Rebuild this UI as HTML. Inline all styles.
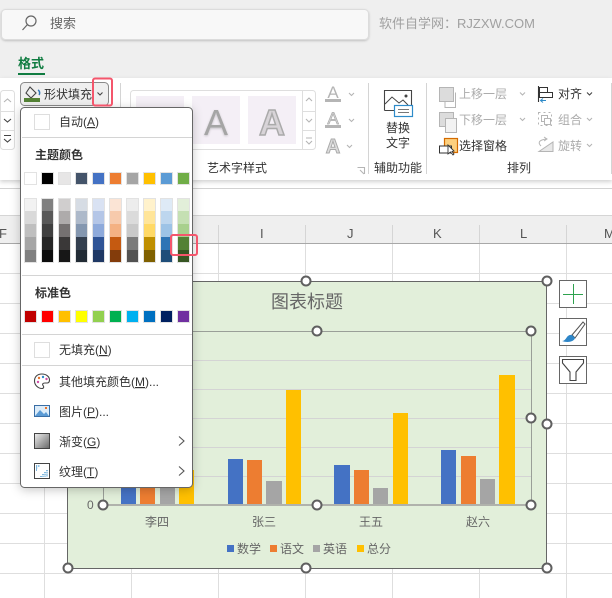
<!DOCTYPE html>
<html><head><meta charset="utf-8"><style>
html,body{margin:0;padding:0;background:#fff;width:612px;height:598px;overflow:hidden}
svg{display:block}
text{font-family:"Liberation Sans","Noto Sans CJK SC",sans-serif;font-size:12px;fill:#333}
.g{fill:#ababab}.u{text-decoration:underline}
.c{fill:none;stroke:#444;stroke-width:1.1}
.cg{fill:none;stroke:#b5b5b5;stroke-width:1.1}
.gr{stroke:#dedede;stroke-width:1}
.gl{stroke:#d5d5d5;stroke-width:1}
.h{fill:#fff;stroke:#5f5f5f;stroke-width:2}
.sep{stroke:#d4d4d4;stroke-width:1}
.l{font-size:12px;fill:#666}
</style></head><body>
<svg width="612" height="598" viewBox="0 0 612 598" xmlns="http://www.w3.org/2000/svg">
<defs>
<filter id="sh" x="-15%" y="-10%" width="130%" height="120%"><feDropShadow dx="0" dy="2" stdDeviation="5" flood-color="#000" flood-opacity=".22"/></filter>
<filter id="rs" x="-2%" y="-10%" width="104%" height="125%"><feDropShadow dx="0" dy="2" stdDeviation="2" flood-color="#000" flood-opacity=".18"/></filter>
<filter id="bs" x="-2%" y="-20%" width="104%" height="150%"><feDropShadow dx="0" dy="1" stdDeviation="1" flood-color="#000" flood-opacity=".2"/></filter>
<filter id="as" x="-20%" y="-20%" width="140%" height="140%"><feDropShadow dx="0" dy="1" stdDeviation="1" flood-color="#000" flood-opacity=".2"/></filter>
<linearGradient id="gd" x1="0" y1="0" x2="1" y2="1"><stop offset="0" stop-color="#f0f0f0"/><stop offset="1" stop-color="#666"/></linearGradient>
</defs>
<rect width="612" height="598" fill="#fff"/>
<!-- grid -->
<rect x="0" y="216" width="612" height="27" fill="#efefef"/>
<path class="gl" d="M0 215.500H612"/>
<path d="M0 243.500H612" stroke="#a8a8a8" stroke-width="1"/>
<path class="gl" d="M44.500 225V243M131.500 225V243M218.500 225V243M305.500 225V243M392.500 225V243M479.500 225V243M566.500 225V243"/>
<path class="gr" d="M0 273.500H612M0 303.500H612M0 333.500H612M0 363.500H612M0 393.500H612M0 423.500H612M0 453.500H612M0 483.500H612M0 513.500H612M0 543.500H612M0 573.500H612M44.500 244V598M131.500 244V598M218.500 244V598M305.500 244V598M392.500 244V598M479.500 244V598M566.500 244V598"/>
<text x="-1" y="238" style="font-size:13px;fill:#555">F</text>
<text x="260" y="238" style="font-size:13px;fill:#555">I</text>
<text x="347" y="238" style="font-size:13px;fill:#555">J</text>
<text x="433" y="238" style="font-size:13px;fill:#555">K</text>
<text x="520" y="238" style="font-size:13px;fill:#555">L</text>
<text x="604" y="238" style="font-size:13px;fill:#555">M</text>
<!-- top -->
<rect x="0" y="0" width="612" height="78" fill="#efefef"/>
<rect x="0" y="78" width="612" height="102" fill="#fff" filter="url(#rs)"/>
<path d="M0 188.500H612" stroke="#d2d2d2" stroke-width="1"/>
<rect x="1.500" y="9.500" width="367" height="30" rx="4" fill="#f8f8f8" stroke="#dcdcdc" filter="url(#bs)"/>
<circle cx="31" cy="21" r="5" fill="none" stroke="#666" stroke-width="1.200"/><path d="M27.500 24.500L22.500 30" stroke="#666" stroke-width="1.200"/>
<text x="50" y="28" style="font-size:13px;fill:#666">搜索</text>
<text x="379" y="28" style="font-size:13px;fill:#a0a0a0">软件自学网：RJZXW.COM</text>
<text x="18" y="68" style="font-size:13px;font-weight:bold;fill:#107c41">格式</text>
<rect x="18" y="73" width="27" height="2" fill="#107c41"/>
<!-- ribbon -->
<rect x="0.500" y="90.500" width="14" height="59" rx="3" fill="#fff" stroke="#dedede"/>
<path d="M0 111.500H14M0 130.500H14" stroke="#dedede"/>
<path d="M4 102L7.500 99L11 102" class="cg"/><path d="M4 119L7.500 122L11 119" class="c"/>
<path d="M4 135.500H11M4 139L7.500 142L11 139" class="c"/>
<rect x="20.500" y="82.500" width="88" height="23" rx="4" fill="#efefef" stroke="#8a8a8a"/>
<path d="M30 87L36 93L31 98L26 93Z" fill="none" stroke="#444" stroke-width="1.100"/>
<path d="M38 90C40 91 40 94 39 95" fill="none" stroke="#2e75b6" stroke-width="1.500"/>
<rect x="24" y="98" width="16" height="4" fill="#548235"/>
<text x="44" y="98.500">形状填充</text>
<path d="M97.500 92.500L100 95L102.500 92.500" class="c"/>
<path class="sep" d="M120.500 83V174M368.500 83V174M426.500 83V174M611.500 83V174"/>
<!-- gallery -->
<rect x="130.500" y="90.500" width="185" height="59" rx="3" fill="#fff" stroke="#dedede"/>
<rect x="136" y="96" width="48" height="48" fill="#f4eff6"/>
<rect x="192" y="96" width="48" height="48" fill="#f4eff6"/>
<rect x="248" y="96" width="48" height="48" fill="#f4eff6"/>
<text x="216" y="135" text-anchor="middle" filter="url(#as)" style="font-size:36px;fill:#a5a5a5">A</text>
<text x="272" y="135" text-anchor="middle" style="font-size:36px;fill:#d8d4d8;stroke:#aaa;stroke-width:1.500;font-weight:bold">A</text>
<path d="M302.500 91V149M302 111.500H315M302 130.500H315" stroke="#dedede"/>
<path d="M306 101L309 98L312 101M306 119L309 122L312 119M306 138H312M306 141L309 144L312 141" class="cg"/>
<text x="207" y="172">艺术字样式</text>
<text x="333" y="98" text-anchor="middle" style="font-size:17px;fill:#b5b5b5">A</text>
<rect x="325" y="99" width="16" height="3" fill="#b5b5b5"/>
<text x="333" y="124" text-anchor="middle" style="font-size:17px;fill:#d8d8d8;stroke:#aaa;stroke-width:.7">A</text>
<rect x="325" y="125" width="16" height="3" fill="#b5b5b5"/>
<text x="333" y="153" text-anchor="middle" style="font-size:20px;fill:#ddd;stroke:#aaa;stroke-width:1;font-weight:bold">A</text>
<path d="M349 93L351.500 95.500L354 93M349 119L351.500 121.500L354 119M347 145L349.500 147.500L352 145" class="cg"/>
<path d="M357.500 167.500H364.500V174M360 170L364 174" class="cg" stroke-width=".8"/>
<!-- alt text -->
<path d="M384.500 110.500V90.500H411.500V105" fill="none" stroke="#444" stroke-width="1.100"/>
<path d="M384.500 110.500H394M385 104L392 97L399 103L403 100L408 105" fill="none" stroke="#444" stroke-width="1"/>
<circle cx="406" cy="96" r="1.500" fill="#444"/>
<rect x="394.500" y="105.500" width="18" height="11" fill="#fff" stroke="#2e8bc9" stroke-width="1.200"/>
<path d="M398 109.500H409M398 112.500H409" stroke="#777"/>
<text x="398" y="132" text-anchor="middle">替换</text>
<text x="398" y="147" text-anchor="middle">文字</text>
<text x="398" y="172" text-anchor="middle">辅助功能</text>
<!-- arrange -->
<rect x="439.500" y="87.500" width="14" height="14" fill="#dcdcdc" stroke="#b5b5b5"/>
<path d="M455.500 92.500V107.500H445V102" fill="none" stroke="#b5b5b5"/>
<text x="459" y="98" class="g">上移一层</text>
<path d="M520 92.500L522.500 95L525 92.500M520 118L522.500 120.500L525 118" class="cg"/>
<rect x="439.500" y="112.500" width="14" height="14" fill="#dcdcdc" stroke="#b5b5b5"/>
<rect x="445.500" y="118.500" width="11" height="14" fill="#f2f2f2" stroke="#b5b5b5"/>
<text x="459" y="124" class="g">下移一层</text>
<rect x="444.500" y="138.500" width="13" height="14" fill="#fdd07f" stroke="#d46a00" stroke-width="1.200"/>
<rect x="439.500" y="146" width="12" height="7" fill="#fff" stroke="#333"/>
<path d="M448 145V154L450.500 152L453 155L454 154L452 151.500L454 151Z" fill="#fff" stroke="#333" stroke-width=".9"/>
<text x="459" y="150">选择窗格</text>
<text x="519" y="172" text-anchor="middle">排列</text>
<path d="M538.500 86V102" stroke="#333" stroke-width="1.100"/>
<rect x="539.500" y="87.500" width="8" height="5" fill="#fff" stroke="#333"/>
<rect x="539.500" y="92.500" width="13" height="5" fill="#fff" stroke="#333"/>
<path d="M546 100.500H541M543 98.500L540.500 100.500L543 102.500" fill="none" stroke="#2e8bc9"/>
<text x="558" y="98">对齐</text>
<path d="M587 92.500L589.500 95L592 92.500" class="c"/>
<rect x="538.500" y="112.500" width="13" height="13" fill="none" stroke="#b5b5b5" stroke-dasharray="2 3"/>
<rect x="541.500" y="115.500" width="6" height="6" fill="#fff" stroke="#b5b5b5"/>
<rect x="544.500" y="118.500" width="6" height="6" fill="#fff" stroke="#b5b5b5"/>
<text x="558" y="124" class="g">组合</text>
<path d="M587 118L589.500 120.500L592 118M587 144L589.500 146.500L592 144" class="cg"/>
<path d="M539 151.500H553V142Z" fill="#e8e8e8" stroke="#b5b5b5"/>
<path d="M541 146C537 142 540 140 546 139M544 137L547 139L544 141" fill="none" stroke="#b5b5b5"/>
<text x="558" y="150" class="g">旋转</text>
<!-- chart -->
<rect x="67.500" y="281.500" width="479" height="287" fill="#e2efda" stroke="#666" stroke-width="1"/>
<text x="307" y="308" text-anchor="middle" style="font-size:18px;fill:#666">图表标题</text>
<path d="M103 360.500H531M103 389.500H531M103 418.500H531M103 447.500H531M103 476.500H531" stroke="#d4d4d4"/>
<rect x="103.500" y="331.500" width="428" height="174" fill="none" stroke="#9a9f98" stroke-width="1"/>
<path d="M103 505H531" stroke="#b0b2ac" stroke-width="2"/>
<g fill="#4472c4"><rect x="121" y="470" width="15" height="34"/><rect x="228" y="459" width="15" height="45"/><rect x="334" y="465" width="16" height="39"/><rect x="441" y="450" width="15" height="54"/></g>
<g fill="#ed7d31"><rect x="140" y="470" width="15" height="34"/><rect x="247" y="460" width="15" height="44"/><rect x="354" y="470" width="15" height="34"/><rect x="461" y="456" width="15" height="48"/></g>
<g fill="#a5a5a5"><rect x="160" y="470" width="15" height="34"/><rect x="266" y="481" width="16" height="23"/><rect x="373" y="488" width="15" height="16"/><rect x="480" y="479" width="15" height="25"/></g>
<g fill="#ffc000"><rect x="179" y="470" width="15" height="34"/><rect x="286" y="390" width="15" height="114"/><rect x="393" y="413" width="15" height="91"/><rect x="499" y="375" width="16" height="129"/></g>
<text x="87" y="509" class="l">0</text>
<text x="157" y="526" text-anchor="middle" class="l">李四</text>
<text x="264" y="526" text-anchor="middle" class="l">张三</text>
<text x="371" y="526" text-anchor="middle" class="l">王五</text>
<text x="478" y="526" text-anchor="middle" class="l">赵六</text>
<rect x="227" y="545" width="7" height="7" fill="#4472c4"/><text x="237" y="553" class="l">数学</text>
<rect x="270" y="545" width="7" height="7" fill="#ed7d31"/><text x="280" y="553" class="l">语文</text>
<rect x="313" y="545" width="7" height="7" fill="#a5a5a5"/><text x="323" y="553" class="l">英语</text>
<rect x="357" y="545" width="7" height="7" fill="#ffc000"/><text x="367" y="553" class="l">总分</text>
<circle class="h" cx="306" cy="281" r="4.500"/><circle class="h" cx="547" cy="281" r="4.500"/><circle class="h" cx="547" cy="424" r="4.500"/><circle class="h" cx="547" cy="568" r="4.500"/><circle class="h" cx="306" cy="568" r="4.500"/><circle class="h" cx="68" cy="568" r="4.500"/>
<circle class="h" cx="317" cy="331" r="4.500"/><circle class="h" cx="531" cy="331" r="4.500"/><circle class="h" cx="531" cy="418" r="4.500"/><circle class="h" cx="531" cy="505" r="4.500"/><circle class="h" cx="317" cy="505" r="4.500"/><circle class="h" cx="103" cy="505" r="4.500"/>
<!-- chart side buttons -->
<rect x="559.500" y="280.500" width="27" height="27" fill="#fff" stroke="#666"/>
<path d="M573.500 284V304M563 294.500H583" stroke="#2ea24e" stroke-width="1"/>
<rect x="559.500" y="318.500" width="27" height="27" fill="#fff" stroke="#666"/>
<path d="M572 335L583 322L585 324L575 338Z" fill="#fff" stroke="#555" stroke-width="1"/>
<path d="M562 341C567 341 566 334 572 335L575 338C574 342 567 343 562 341Z" fill="#2e86c8"/>
<rect x="559.500" y="356.500" width="27" height="27" fill="#fff" stroke="#666"/>
<path d="M562.500 359.500H583.500V363L576 372V380.500H570V372L562.500 363Z" fill="#fff" stroke="#444" stroke-width="1.100"/>
<!-- menu -->
<rect x="20.500" y="107.500" width="172" height="380" rx="4" fill="#fff" stroke="#666" stroke-width="1" filter="url(#sh)"/>
<rect x="34.500" y="114.500" width="15" height="15" fill="#fff" stroke="#dedede"/>
<text x="59" y="126">自动(<tspan class="u">A</tspan>)</text>
<path class="sep" d="M22 137.500H192M22 275.500H192M22 334.500H192M22 365.500H192"/>
<text x="35" y="159" style="font-weight:bold">主题颜色</text>
<g stroke="#e2e2e2">
<rect x="24.500" y="172.500" width="12" height="12" fill="#fff"/><rect x="41.500" y="172.500" width="12" height="12" fill="#000"/><rect x="58.500" y="172.500" width="12" height="12" fill="#e7e6e6"/><rect x="75.500" y="172.500" width="12" height="12" fill="#44546a"/><rect x="92.500" y="172.500" width="12" height="12" fill="#4472c4"/><rect x="109.500" y="172.500" width="12" height="12" fill="#ed7d31"/><rect x="126.500" y="172.500" width="12" height="12" fill="#a5a5a5"/><rect x="143.500" y="172.500" width="12" height="12" fill="#ffc000"/><rect x="160.500" y="172.500" width="12" height="12" fill="#5b9bd5"/><rect x="177.500" y="172.500" width="12" height="12" fill="#70ad47"/>
<rect x="24.500" y="310.500" width="12" height="12" fill="#c00000"/><rect x="41.500" y="310.500" width="12" height="12" fill="#ff0000"/><rect x="58.500" y="310.500" width="12" height="12" fill="#ffc000"/><rect x="75.500" y="310.500" width="12" height="12" fill="#ffff00"/><rect x="92.500" y="310.500" width="12" height="12" fill="#92d050"/><rect x="109.500" y="310.500" width="12" height="12" fill="#00b050"/><rect x="126.500" y="310.500" width="12" height="12" fill="#00b0f0"/><rect x="143.500" y="310.500" width="12" height="12" fill="#0070c0"/><rect x="160.500" y="310.500" width="12" height="12" fill="#002060"/><rect x="177.500" y="310.500" width="12" height="12" fill="#7030a0"/>
</g>
<g>
<rect x="24" y="198" width="13" height="13" fill="#f2f2f2"/><rect x="24" y="211" width="13" height="13" fill="#d9d9d9"/><rect x="24" y="224" width="13" height="13" fill="#bfbfbf"/><rect x="24" y="237" width="13" height="13" fill="#a6a6a6"/><rect x="24" y="250" width="13" height="13" fill="#808080"/>
<rect x="41" y="198" width="13" height="13" fill="#808080"/><rect x="41" y="211" width="13" height="13" fill="#595959"/><rect x="41" y="224" width="13" height="13" fill="#404040"/><rect x="41" y="237" width="13" height="13" fill="#262626"/><rect x="41" y="250" width="13" height="13" fill="#0d0d0d"/>
<rect x="58" y="198" width="13" height="13" fill="#d0cece"/><rect x="58" y="211" width="13" height="13" fill="#aeabab"/><rect x="58" y="224" width="13" height="13" fill="#757171"/><rect x="58" y="237" width="13" height="13" fill="#3a3838"/><rect x="58" y="250" width="13" height="13" fill="#171717"/>
<rect x="75" y="198" width="13" height="13" fill="#d6dce4"/><rect x="75" y="211" width="13" height="13" fill="#adb9ca"/><rect x="75" y="224" width="13" height="13" fill="#8497b0"/><rect x="75" y="237" width="13" height="13" fill="#333f4f"/><rect x="75" y="250" width="13" height="13" fill="#222b35"/>
<rect x="92" y="198" width="13" height="13" fill="#d9e2f3"/><rect x="92" y="211" width="13" height="13" fill="#b4c6e7"/><rect x="92" y="224" width="13" height="13" fill="#8eaadb"/><rect x="92" y="237" width="13" height="13" fill="#2f5496"/><rect x="92" y="250" width="13" height="13" fill="#1f3864"/>
<rect x="109" y="198" width="13" height="13" fill="#fbe4d5"/><rect x="109" y="211" width="13" height="13" fill="#f7caac"/><rect x="109" y="224" width="13" height="13" fill="#f4b183"/><rect x="109" y="237" width="13" height="13" fill="#c55a11"/><rect x="109" y="250" width="13" height="13" fill="#833c0b"/>
<rect x="126" y="198" width="13" height="13" fill="#ededed"/><rect x="126" y="211" width="13" height="13" fill="#dbdbdb"/><rect x="126" y="224" width="13" height="13" fill="#c9c9c9"/><rect x="126" y="237" width="13" height="13" fill="#7b7b7b"/><rect x="126" y="250" width="13" height="13" fill="#525252"/>
<rect x="143" y="198" width="13" height="13" fill="#fff2cc"/><rect x="143" y="211" width="13" height="13" fill="#ffe599"/><rect x="143" y="224" width="13" height="13" fill="#ffd966"/><rect x="143" y="237" width="13" height="13" fill="#bf8f00"/><rect x="143" y="250" width="13" height="13" fill="#7f6000"/>
<rect x="160" y="198" width="13" height="13" fill="#deeaf6"/><rect x="160" y="211" width="13" height="13" fill="#bdd6ee"/><rect x="160" y="224" width="13" height="13" fill="#9dc3e6"/><rect x="160" y="237" width="13" height="13" fill="#2e74b5"/><rect x="160" y="250" width="13" height="13" fill="#1f4e79"/>
<rect x="177" y="198" width="13" height="13" fill="#e2efd9"/><rect x="177" y="211" width="13" height="13" fill="#c5e0b3"/><rect x="177" y="224" width="13" height="13" fill="#a8d08d"/><rect x="177" y="237" width="13" height="13" fill="#538135"/><rect x="177" y="250" width="13" height="13" fill="#375623"/>
</g>
<g fill="none" stroke="#e2e2e2"><rect x="24.500" y="198.500" width="12" height="64"/><rect x="41.500" y="198.500" width="12" height="64"/><rect x="58.500" y="198.500" width="12" height="64"/><rect x="75.500" y="198.500" width="12" height="64"/><rect x="92.500" y="198.500" width="12" height="64"/><rect x="109.500" y="198.500" width="12" height="64"/><rect x="126.500" y="198.500" width="12" height="64"/><rect x="143.500" y="198.500" width="12" height="64"/><rect x="160.500" y="198.500" width="12" height="64"/><rect x="177.500" y="198.500" width="12" height="64"/></g>
<text x="35" y="297" style="font-weight:bold">标准色</text>
<rect x="34.500" y="342.500" width="15" height="15" fill="#fff" stroke="#dedede"/>
<text x="59" y="354">无填充(<tspan class="u">N</tspan>)</text>
<!-- palette -->
<path d="M42 374C37 374 34.500 377 34.500 381C34.500 385 38 388.500 42 388.500C44 388.500 44 386.500 43 385.500C42 384 43 383 45 383H47C49 383 49.500 381.500 49.500 380C49.500 376.500 46 374 42 374Z" fill="#fff" stroke="#444" stroke-width="1.100"/>
<circle cx="39" cy="378" r="1.200" fill="#e8732a"/><circle cx="43" cy="377" r="1.200" fill="#2e8bc9"/><circle cx="46.500" cy="379" r="1.200" fill="#d14fa8"/><circle cx="38" cy="382" r="1.200" fill="#d14fa8"/>
<text x="59" y="386">其他填充颜色(<tspan class="u">M</tspan>)...</text>
<!-- picture -->
<rect x="34.500" y="405.500" width="15" height="11" fill="#dcecf9" stroke="#3a6ea5"/>
<path d="M35 416L40 410L44 414L46 412L49 416Z" fill="#5b9bd5"/><rect x="45" y="407" width="2" height="2" fill="#e8732a"/>
<text x="59" y="416">图片(<tspan class="u">P</tspan>)...</text>
<!-- gradient -->
<rect x="34.500" y="433.500" width="15" height="15" fill="url(#gd)" stroke="#444"/>
<text x="59" y="446">渐变(<tspan class="u">G</tspan>)</text>
<path d="M179 436.500L184 441L179 445.500" fill="none" stroke="#555" stroke-width="1.100"/>
<!-- texture -->
<rect x="34.500" y="463.500" width="15" height="15" fill="#fff" stroke="#444"/>
<path d="M36 466H40M36 468H38M36 470H37M47 470V477M45 472V477M43 474V477M41 476V477" stroke="#2e8bc9" stroke-width="1.200" stroke-dasharray="1.200 1"/>
<text x="59" y="476">纹理(<tspan class="u">T</tspan>)</text>
<path d="M179 466.500L184 471L179 475.500" fill="none" stroke="#555" stroke-width="1.100"/>
<!-- highlights -->
<rect x="93" y="78.500" width="19" height="27" rx="2" fill="none" stroke="#f4566c" stroke-width="2"/>
<rect x="171" y="235" width="26" height="20" rx="2" fill="none" stroke="#f4566c" stroke-width="2"/>
</svg>
</body></html>
